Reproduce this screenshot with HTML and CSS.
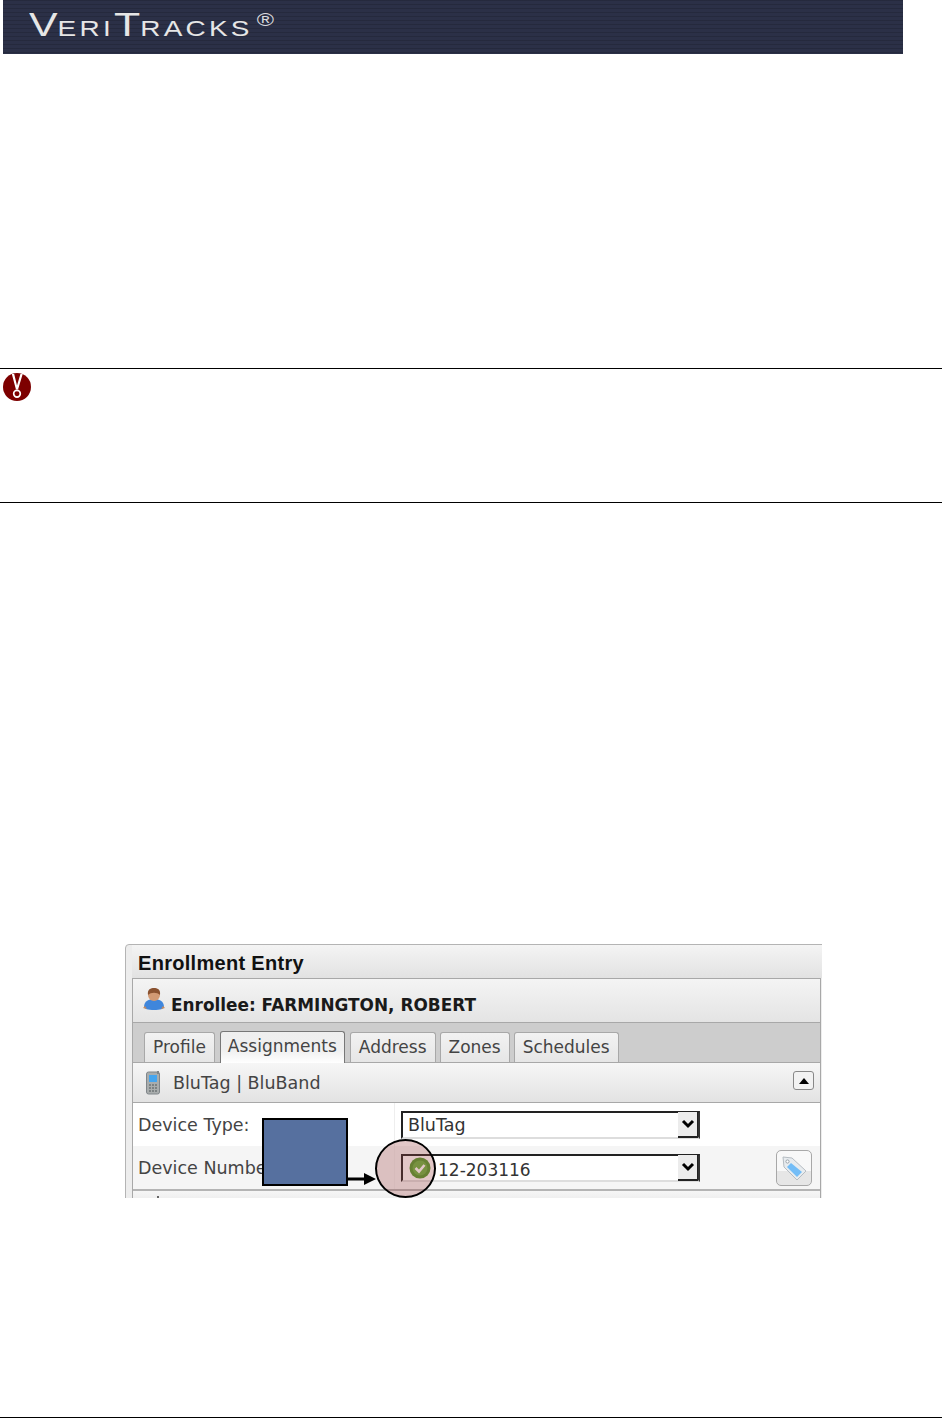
FILE: index.html

```html
<!DOCTYPE html>
<html lang="en">
<head>
  <meta charset="UTF-8">
  <title>VeriTracks</title>
  <link rel="stylesheet" href="styles.css">
</head>
<body>

<header class="banner">
  <span class="logo"><span class="cap">V</span>eri<span class="cap">T</span>racks<sup class="reg">®</sup></span>
</header>

<div class="note">
  <svg class="medal" width="28" height="28" viewBox="0 0 27 27">
    <circle cx="13.5" cy="13.5" r="13.5" fill="#7d0000"/>
    <path d="M8.5 1 L12.5 16 L14.5 16 L19 1 L16.8 1 L13.5 12 L10.8 1 Z" fill="#fff"/>
    <circle cx="13.5" cy="20" r="3.2" fill="none" stroke="#fff" stroke-width="1.6"/>
  </svg>
</div>

<div class="shot">
  <div class="panel">
    <div class="panel-title">Enrollment Entry</div>
    <div class="inner">
      <div class="enrollee">
        <svg class="enrollee-icon" width="24" height="24" viewBox="0 0 24 24">
          <path d="M2 20 C2 14 7 12 12 12 C17 12 22 14 22 20 C22 22 18 23 12 23 C6 23 2 22 2 20 Z" fill="#3f86dc"/>
          <path d="M3 19 L1 21 L5 22 Z M21 19 L23 21 L19 22 Z" fill="#c98a5a"/>
          <circle cx="12" cy="8" r="6" fill="#d29a74"/>
          <path d="M6 8 C5 2 9 1 12 1 C15 1 19 2 18 8 C15 5 9 5 6 8 Z" fill="#8a5230"/>
        </svg>
        <span class="enrollee-name">Enrollee: FARMINGTON, ROBERT</span>
      </div>
      <div class="tabs">
        <span class="tab">Profile</span>
        <span class="tab tab-active">Assignments</span>
        <span class="tab">Address</span>
        <span class="tab">Zones</span>
        <span class="tab">Schedules</span>
      </div>
      <div class="section-head">
        <svg width="14" height="24" viewBox="0 0 14 24">
          <rect x="0.5" y="1" width="13" height="22" rx="2" fill="#a9adad" stroke="#80868a"/>
          <rect x="11" y="0" width="2" height="3" fill="#80868a"/>
          <rect x="3" y="4" width="8" height="7" fill="#45a5ee"/>
          <path d="M3 14h8M3 17h8M3 20h8" stroke="#6e7476" stroke-width="1.6" stroke-dasharray="2 1"/>
        </svg>
        <span class="section-name">BluTag | BluBand</span>
        <span class="collapse"><i class="tri"></i></span>
      </div>
      <div class="row row-one">
        <span class="label">Device Type:</span>
        <div class="field">
          <div class="select"><span class="value">BluTag</span><span class="drop"><svg width="14" height="10" viewBox="0 0 14 10"><path d="M2 2 L7 7 L12 2" fill="none" stroke="#000" stroke-width="3"/></svg></span></div>
        </div>
      </div>
      <div class="row row-two">
        <span class="label">Device Number:</span>
        <div class="field">
          <div class="select">
            <svg class="ok" width="22" height="22" viewBox="0 0 22 22">
              <circle cx="11" cy="11" r="10.5" fill="#4f9a2c"/>
              <circle cx="11" cy="11" r="7.5" fill="#66b23e"/>
              <path d="M6.5 11 L10 14.5 L15.5 8" fill="none" stroke="#fff" stroke-width="2.6"/>
            </svg>
            <span class="value value-num">12-203116</span>
            <span class="drop"><svg width="14" height="10" viewBox="0 0 14 10"><path d="M2 2 L7 7 L12 2" fill="none" stroke="#000" stroke-width="3"/></svg></span>
          </div>
        </div>
        <span class="tag-btn">
          <svg width="28" height="28" viewBox="0 0 28 28">
            <path d="M3 3 L12 4 L26 17 L17 26 L4 13 Z" fill="#e8ecef" stroke="#b5bcc2"/>
            <path d="M11 9 L22 18 L17 23 L7 13 Z" fill="#73bdf7"/>
            <circle cx="7.5" cy="7.5" r="1.6" fill="#fff" stroke="#9aa3aa"/>
          </svg>
        </span>
      </div>
      <div class="section-next">
        <i class="next-icon"></i>
        <i class="next-btn"></i>
      </div>
    </div>
  </div>
  <div class="callout-box"></div>
  <svg class="callout-arrow" width="28" height="12" viewBox="0 0 28 12"><path d="M0 4.5h16v-4.5l12 6l-12 6v-4.5h-16z" fill="#000"/></svg>
  <div class="callout-circle"></div>
</div>

<div class="foot-line"></div>

</body>
</html>
```

FILE: styles.css

```css
html, body {
  margin: 0;
  padding: 0;
  height: 1419px;
  overflow: hidden;
  background-color: #fff;
}
body {
  display: flex;
  flex-direction: column;
  font-family: "DejaVu Sans", sans-serif;
  color: #222;
}

/* banner */
.banner {
  flex: none;
  box-sizing: border-box;
  width: 900px;
  height: 54px;
  margin-left: 3px;
  padding-left: 26px;
  background-color: #2b3047;
  background-image: repeating-linear-gradient(to bottom, rgba(0,0,0,.14) 0, rgba(0,0,0,.14) 1px, transparent 1px, transparent 4px);
  overflow: hidden;
}
.logo {
  display: block;
  font-family: "Liberation Sans", sans-serif;
  font-size: 21.5px;
  line-height: 42px;
  padding-top: 4px;
  letter-spacing: 2.5px;
  text-transform: uppercase;
  color: #e6e6e6;
  white-space: nowrap;
  transform: scaleX(1.3);
  transform-origin: left center;
}
.cap {
  font-size: 33px;
  letter-spacing: 0;
}
.reg {
  font-size: 18px;
  line-height: 0;
  letter-spacing: 0;
  vertical-align: 10px;
  color: #d8d8dc;
  margin-left: 3px;
}

/* note between the two rules */
.note {
  flex: none;
  box-sizing: border-box;
  height: 135px;
  margin-top: 314px;
  padding: 4px 0 0 3px;
  border-top: 1px solid #000;
  border-bottom: 1px solid #000;
}
.medal {
  display: block;
}

/* screenshot figure */
.shot {
  flex: none;
  position: relative;
  box-sizing: border-box;
  width: 699px;
  height: 254px;
  margin: 441px 0 0 123px;
  overflow: hidden;
}
.panel {
  box-sizing: border-box;
  width: 720px;
  height: 300px;
  margin-left: 2px;
  padding-left: 6px;
  background: #ededed;
  border: 1px solid #b4b4b4;
  border-radius: 4px 0 0 0;
}
.panel-title {
  height: 33px;
  padding-left: 6px;
  font-family: "Liberation Sans", sans-serif;
  font-size: 20px;
  font-weight: bold;
  letter-spacing: .3px;
  line-height: 37px;
  color: #111;
  background: linear-gradient(#f4f4f4, #e2e2e2);
}
.inner {
  box-sizing: border-box;
  width: 689px;
  border: 1px solid #a8a8a8;
  border-bottom: 0;
  background: #fff;
}
.enrollee {
  display: flex;
  align-items: center;
  height: 43px;
  gap: 5px;
  padding-left: 9px;
  font-size: 16.9px;
  font-weight: bold;
  color: #1a1a1a;
  background: linear-gradient(#f4f4f4, #e4e4e4);
  border-bottom: 1px solid #a8a8a8;
}
.enrollee-icon {
  margin-top: -4px;
}
.enrollee-name {
  margin-top: 8px;
}
.tabs {
  display: flex;
  box-sizing: border-box;
  height: 40px;
  padding: 9px 0 0 11px;
  gap: 4px;
  background: #cdcdcd;
  border-bottom: 1px solid #a8a8a8;
}
.tab {
  box-sizing: border-box;
  height: 30px;
  padding: 0 8px;
  font-size: 17px;
  line-height: 29px;
  color: #444;
  background: linear-gradient(#f2f2f2, #e6e6e6);
  border: 1px solid #a8a8a8;
  border-bottom: 0;
  border-radius: 3px 3px 0 0;
}
.tab-active {
  position: relative;
  height: 32px;
  margin: -1px 1px -1px 1px;
  padding: 0 7px;
  background: linear-gradient(#efefef 0, #f0f0f0 60%, #fff 100%);
  border-color: #777;
}
.section-head {
  display: flex;
  align-items: center;
  height: 39px;
  padding-left: 13px;
  background: linear-gradient(#f6f6f6, #e3e3e3);
  border-bottom: 1px solid #a8a8a8;
}
.section-name {
  margin-left: 13px;
  font-size: 17.5px;
  color: #444;
}
.collapse {
  display: flex;
  align-items: center;
  justify-content: center;
  box-sizing: border-box;
  width: 21px;
  height: 19px;
  margin: -4px 6px 0 auto;
  border: 1px solid #888;
  border-radius: 3px;
  background: #f2f2f2;
}
.tri {
  width: 0;
  height: 0;
  border-left: 5px solid transparent;
  border-right: 5px solid transparent;
  border-bottom: 6px solid #000;
}
.row {
  display: flex;
  align-items: center;
  height: 43px;
}
.row-two {
  background: #f5f5f5;
  border-bottom: 2px solid #b4b4b4;
}
.label {
  box-sizing: border-box;
  width: 262px;
  padding: 2px 0 0 5px;
  font-size: 17.5px;
  color: #444;
  white-space: nowrap;
  overflow: hidden;
  border-right: 1px solid #eee;
  line-height: 41px;
}
.field {
  width: 381px;
  padding-left: 6px;
  box-sizing: border-box;
}
.select {
  display: flex;
  align-items: center;
  box-sizing: border-box;
  width: 299px;
  height: 28px;
  border: 2px solid #222;
  border-right-color: #333;
  border-bottom-color: #ddd;
  background: #fff;
  font-size: 17.5px;
  color: #333;
}
.value {
  margin-left: 5px;
}
.value-num {
  margin: 4px 0 0 7px;
  font-size: 17px;
}
.ok {
  margin-left: 6px;
}
.drop {
  display: flex;
  align-items: center;
  justify-content: center;
  box-sizing: border-box;
  width: 20px;
  height: 26px;
  margin-left: auto;
  background: #ececec;
  border-right: 1px solid #222;
  border-bottom: 2px solid #222;
}
.tag-btn {
  display: flex;
  align-items: center;
  justify-content: center;
  box-sizing: border-box;
  width: 36px;
  height: 36px;
  flex: none;
  border: 1px solid #a8a8a8;
  border-radius: 5px;
  background: linear-gradient(#f8f8f8 60%, #e6e6e6 60%);
}
.section-next {
  display: flex;
  height: 20px;
  padding-left: 24px;
  background: linear-gradient(#f6f6f6, #e3e3e3);
}
.next-icon {
  width: 2px;
  height: 4px;
  margin-top: 5px;
  background: #666;
}
.next-btn {
  width: 18px;
  height: 3px;
  margin: 7px 7px 0 auto;
  background: #aaa;
}

/* overlay drawn on top of the screenshot */
.callout-box {
  position: absolute;
  left: 139px;
  top: 174px;
  box-sizing: border-box;
  width: 86px;
  height: 68px;
  background: #56709f;
  border: 2px solid #000;
}
.callout-arrow {
  position: absolute;
  left: 225px;
  top: 229px;
}
.callout-circle {
  position: absolute;
  left: 252px;
  top: 195px;
  box-sizing: border-box;
  width: 61px;
  height: 59px;
  border: 2px solid #000;
  border-radius: 50%;
  background: rgba(160, 70, 70, .3);
}

.foot-line {
  flex: none;
  height: 1px;
  margin-top: 219px;
  background: #000;
}
```
